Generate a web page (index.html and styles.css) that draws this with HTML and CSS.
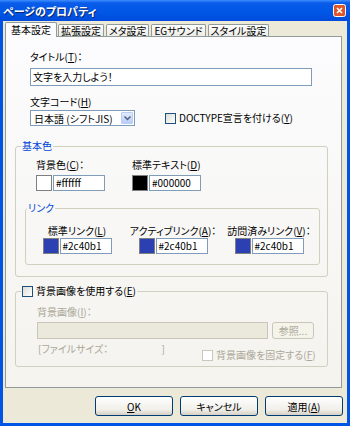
FILE: index.html
```html
<!DOCTYPE html>
<html lang="ja">
<head>
  <meta charset="UTF-8" />
  <title>ページのプロパティ</title>
  <link rel="stylesheet" href="styles.css">
</head>
<body>

  <div class="window">
    <!-- Title bar -->
    <div class="titlebar">
      <span class="title">ページのプロパティ</span>
      <svg class="close-btn" width="13" height="13" viewBox="0 0 13 13">
        <rect x="0.5" y="0.5" width="12" height="12" rx="2" fill="#e0562b" stroke="#fff" />
        <path d="M4 4 L9 9 M9 4 L4 9" stroke="#fff" stroke-width="1.6" />
      </svg>
    </div>

    <div class="client">
      <div class="tabs">
        <div class="tab active">基本設定</div>
        <div class="tab">拡張設定</div>
        <div class="tab">メタ設定</div>
        <div class="tab">EGサウンド</div>
        <div class="tab">スタイル設定</div>
      </div>

      <div class="panel">
        <div class="title-field">
          <div class="lbl">タイトル(<u>T</u>)：</div>
          <div class="textbox wide">文字を入力しよう！</div>
        </div>

        <div class="encoding-row">
          <div>
            <div class="lbl">文字コード(<u>H</u>)</div>
            <div class="select">
              <span>日本語 (シフトJIS)</span>
              <span class="arrow">
                <svg width="7" height="5" viewBox="0 0 7 5"><path d="M0.5 0.5 L3.5 3.5 L6.5 0.5" fill="none" stroke="#4d6185" stroke-width="1.5"/></svg>
              </span>
            </div>
          </div>
          <div class="check doctype"><span class="box"></span>DOCTYPE宣言を付ける(<u>Y</u>)</div>
        </div>

        <fieldset class="group colors">
          <legend>基本色</legend>
          <div class="color-row">
            <div class="color-field">
              <div class="lbl">背景色(<u>C</u>)：</div>
              <div class="color-input"><span class="swatch" style="background:#ffffff"></span><span class="textbox">#ffffff</span></div>
            </div>
            <div class="color-field second">
              <div class="lbl">標準テキスト(<u>D</u>)</div>
              <div class="color-input"><span class="swatch" style="background:#000000"></span><span class="textbox">#000000</span></div>
            </div>
          </div>

          <fieldset class="group links">
            <legend>リンク</legend>
            <div class="link-row">
              <div class="link-field">
                <div class="lbl">標準リンク(<u>L</u>)</div>
                <div class="color-input"><span class="swatch" style="background:#2c40b1"></span><span class="textbox">#2c40b1</span></div>
              </div>
              <div class="link-field">
                <div class="lbl">アクティブリンク(<u>A</u>)：</div>
                <div class="color-input"><span class="swatch" style="background:#2c40b1"></span><span class="textbox">#2c40b1</span></div>
              </div>
              <div class="link-field">
                <div class="lbl">訪問済みリンク(<u>V</u>)：</div>
                <div class="color-input"><span class="swatch" style="background:#2c40b1"></span><span class="textbox">#2c40b1</span></div>
              </div>
            </div>
          </fieldset>
        </fieldset>

        <fieldset class="group bgimage">
          <legend class="check"><span class="box"></span>背景画像を使用する(<u>E</u>)</legend>
          <div class="bg-body">
            <div class="lbl muted">背景画像(<u>I</u>)：</div>
            <div class="file-row">
              <div class="textbox disabled"></div>
              <div class="btn disabled">参照...</div>
            </div>
            <div class="size-row">
              <div class="size-text muted"><span>[ファイルサイズ：</span><span>]</span></div>
              <div class="check fixed muted"><span class="box"></span>背景画像を固定する(<u>F</u>)</div>
            </div>
          </div>
        </fieldset>
      </div>

      <div class="buttons">
        <div class="btn"><u>O</u>K</div>
        <div class="btn">キャンセル</div>
        <div class="btn">適用(<u>A</u>)</div>
      </div>
    </div>
  </div>

</body>
</html>
```

FILE: styles.css
```css
body {
  margin: 0;
  font-family: "Noto Sans CJK JP", "Noto Sans", sans-serif;
  font-size: 10px;
  font-feature-settings: "palt";
  color: #000;
  background: #fff;
}

u {
  text-decoration: underline;
  text-underline-offset: 1px;
}

.window {
  width: 350px;
  height: 426px;
  display: flex;
  flex-direction: column;
  background: #0055e5;
}

.titlebar {
  height: 21px;
  display: flex;
  align-items: center;
  justify-content: space-between;
  padding: 0 4px 0 3px;
  background: linear-gradient(#3d8dff 0, #0a5be9 3px, #0056e6 60%, #004bdc 100%);
}

.title {
  color: #fff;
  font-size: 11px;
  font-weight: bold;
  text-shadow: 1px 1px #0a246a;
}

.close-btn {
  display: block;
}

.client {
  flex: 1;
  margin: 0 3px 3px;
  background: #ece9d8;
  display: flex;
  flex-direction: column;
}

/* tabs */

.tabs {
  display: flex;
  align-items: flex-end;
  margin: 1px 0 0 2px;
  height: 14px;
}

.tab {
  height: 11px;
  line-height: 11px;
  padding: 0 2px;
  margin-right: 2px;
  border: 1px solid #919b9c;
  border-bottom: none;
  border-radius: 2px 2px 0 0;
  background: linear-gradient(#fefefe, #ecebe6);
  white-space: nowrap;
}

.tab.active {
  height: 14px;
  line-height: 14px;
  padding: 0 5px;
  margin-right: 1px;
  margin-bottom: -1px;
  background: #fcfcfe;
  position: relative;
  z-index: 1;
}

.panel {
  margin-left: 2px;
  width: 337px;
  height: 352px;
  box-sizing: border-box;
  border: 1px solid #919b9c;
  background: linear-gradient(#fcfcfe, #f4f3ee);
}

.lbl {
  line-height: 12px;
  white-space: nowrap;
}

.muted {
  color: #aca899;
}

.textbox {
  display: block;
  box-sizing: border-box;
  height: 16px;
  line-height: 14px;
  padding: 0 2px;
  border: 1px solid #7f9db9;
  background: #fff;
  white-space: nowrap;
}

.textbox.wide {
  width: 282px;
  height: 18px;
  line-height: 16px;
  margin-top: 5px;
}

.title-field {
  margin: 14px 0 0 24px;
}

.encoding-row {
  display: flex;
  align-items: flex-end;
  margin: 10px 0 0 24px;
}

.select {
  display: flex;
  align-items: center;
  justify-content: space-between;
  box-sizing: border-box;
  width: 105px;
  height: 16px;
  margin-top: 2px;
  padding: 0 1px 0 3px;
  border: 1px solid #7f9db9;
  background: #fff;
  white-space: nowrap;
}

.select .arrow {
  width: 12px;
  height: 12px;
  display: flex;
  align-items: center;
  justify-content: center;
  box-sizing: border-box;
  border: 1px solid #b8cdf8;
  border-radius: 1px;
  background: linear-gradient(#e3ebfd, #b9cdf7);
}

.check {
  display: flex;
  align-items: center;
  white-space: nowrap;
  line-height: 12px;
}

.check .box {
  width: 11px;
  height: 11px;
  box-sizing: border-box;
  border: 1px solid #1c5180;
  background: linear-gradient(135deg, #dcdcd6, #fff);
  margin-right: 3px;
}

.doctype {
  margin: 0 0 2px 30px;
}

/* group boxes */

.group {
  margin: 14px 13px 0 9px;
  padding: 0;
  border: 1px solid #d0d0bf;
  border-radius: 3px;
}

.group legend {
  color: #0046d5;
  line-height: 12px;
  padding: 0 1px;
  margin-left: 5px;
}

.color-row {
  display: flex;
  padding: 7px 0 0 20px;
}

.color-field.second {
  margin-left: 27px;
}

.color-input {
  display: flex;
  margin-top: 4px;
}

.swatch {
  width: 16px;
  height: 16px;
  box-sizing: border-box;
  border: 1px solid #808080;
  margin-right: 1px;
}

.color-input .textbox {
  width: 52px;
}

.group.links {
  margin: 11px 7px 11px 9px;
}

.group.links legend {
  margin-left: 1px;
}

.link-row {
  display: flex;
  padding: 11px 0 10px 3px;
}

.link-field {
  width: 96px;
  display: flex;
  flex-direction: column;
  align-items: center;
}

.link-field .color-input {
  margin-top: 1px;
}

.group.bgimage {
  margin-top: 8px;
}

.group.bgimage legend {
  color: #000;
}

.bg-body {
  padding: 9px 0 5px 21px;
}

.file-row {
  display: flex;
  margin-top: 4px;
}

.textbox.disabled {
  width: 231px;
  height: 17px;
  border-color: #c9c7ba;
  background: #ebe8dc;
}

.size-row {
  display: flex;
  margin-top: 4px;
}

.size-text {
  width: 127px;
  display: flex;
  justify-content: space-between;
  line-height: 12px;
  padding-left: 1px;
}

.check.fixed {
  margin: 6px 0 0 37px;
}

.check.fixed .box {
  border-color: #cac8bb;
  background: #fff;
}

/* buttons */

.btn {
  box-sizing: border-box;
  width: 78px;
  height: 20px;
  display: flex;
  align-items: center;
  justify-content: center;
  border: 1px solid #003c74;
  border-radius: 3px;
  background: linear-gradient(#fff, #f0efe9 70%, #d6d0c5);
}

.btn.disabled {
  width: 42px;
  height: 17px;
  margin-left: 4px;
  color: #aca899;
  border-color: #c9c7ba;
  background: #f5f4ea;
}

.buttons {
  display: flex;
  justify-content: flex-end;
  gap: 7px;
  margin: 8px 4px 0 0;
}
```
